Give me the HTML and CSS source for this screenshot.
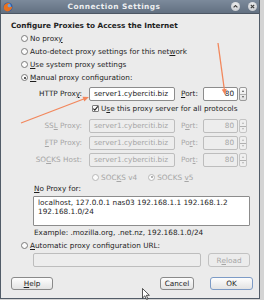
FILE: index.html
```html
<!DOCTYPE html>
<html lang="en">
<head>
<meta charset="UTF-8">
<title>Connection Settings</title>
<link rel="stylesheet" href="styles.css">
</head>
<body>

<div class="window">
  <div class="titlebar">
    <svg class="app-icon" width="10" height="10" viewBox="0 0 10 10">
      <circle cx="5" cy="5" r="4.6" fill="#2d5ea8"/>
      <circle cx="5.6" cy="4.2" r="2.4" fill="#6fa0dc"/>
      <path d="M0.6 5.6 C0.8 2.2 4 0.4 7.4 1.4 C5.6 1.6 4.4 2.6 4.6 4 C5 5.6 7.4 5.4 9.3 4.6 C9 7.6 6.8 9.6 4.4 9.5 C2.2 9.4 0.6 7.8 0.6 5.6 Z" fill="#e8711f"/>
    </svg>
    <span class="title">Connection Settings</span>
    <span class="wm-btn">
      <svg width="9" height="9" viewBox="0 0 9 9"><path d="M2.6 5.4 L4.5 3.5 L6.4 5.4" fill="none" stroke="#3c3c3c" stroke-width="1.2"/></svg>
    </span>
    <span class="wm-btn">
      <svg width="9" height="9" viewBox="0 0 9 9"><path d="M2.8 2.8 L6.2 6.2 M6.2 2.8 L2.8 6.2" fill="none" stroke="#3c3c3c" stroke-width="1.2"/></svg>
    </span>
  </div>

  <div class="content">
    <div class="heading">Configure Proxies to Access the Internet</div>

    <div class="options">
      <div class="option"><span class="radio"></span><span>No prox<u>y</u></span></div>
      <div class="option"><span class="radio"></span><span>Auto-detect proxy settings for this net<u>w</u>ork</span></div>
      <div class="option"><span class="radio"></span><span><u>U</u>se system proxy settings</span></div>
      <div class="option"><span class="radio checked"></span><span><u>M</u>anual proxy configuration:</span></div>
    </div>

    <div class="proxy-grid">
      <span class="lbl">HTTP Prox<u>y</u>:</span>
      <span class="field">server1.cyberciti.biz</span>
      <span class="port-lbl"><u>P</u>ort:</span>
      <span class="port-box">
        <span class="field port">80</span>
        <span class="spinner"><span class="up"></span><span class="down"></span></span>
      </span>

      <div class="check-row">
        <span class="checkbox">
          <svg width="7" height="7" viewBox="0 0 7 7"><path d="M1.3 3.6 L2.8 5.2 L5.8 1.4" fill="none" stroke="#222" stroke-width="1.1"/></svg>
        </span>
        <span>U<u>s</u>e this proxy server for all protocols</span>
      </div>

      <span class="lbl off">SS<u>L</u> Proxy:</span>
      <span class="field off">server1.cyberciti.biz</span>
      <span class="port-lbl off">P<u>o</u>rt:</span>
      <span class="port-box off">
        <span class="field port off">80</span>
        <span class="spinner"><span class="up"></span><span class="down"></span></span>
      </span>

      <span class="lbl off"><u>F</u>TP Proxy:</span>
      <span class="field off">server1.cyberciti.biz</span>
      <span class="port-lbl off">Po<u>r</u>t:</span>
      <span class="port-box off">
        <span class="field port off">80</span>
        <span class="spinner"><span class="up"></span><span class="down"></span></span>
      </span>

      <span class="lbl off">SO<u>C</u>KS Host:</span>
      <span class="field off">server1.cyberciti.biz</span>
      <span class="port-lbl off">Por<u>t</u>:</span>
      <span class="port-box off">
        <span class="field port off">80</span>
        <span class="spinner"><span class="up"></span><span class="down"></span></span>
      </span>

      <div class="socks-row off">
        <span class="option-inline"><span class="radio"></span><span>SOC<u>K</u>S v4</span></span>
        <span class="option-inline"><span class="radio checked"></span><span>SOCKS <u>v</u>5</span></span>
      </div>
    </div>

    <div class="no-proxy">
      <div class="np-label"><u>N</u>o Proxy for:</div>
      <div class="textarea">localhost, 127.0.0.1 nas03 192.168.1.1 192.168.1.2<br>192.168.1.0/24</div>
      <div class="example">Example: .mozilla.org, .net.nz, 192.168.1.0/24</div>
    </div>

    <div class="option auto"><span class="radio"></span><span><u>A</u>utomatic proxy configuration URL:</span></div>

    <div class="url-row">
      <span class="field off url"></span>
      <span class="btn off reload">R<u>e</u>load</span>
    </div>

    <div class="buttons">
      <span class="btn help"><u>H</u>elp</span>
      <span class="spacer"></span>
      <span class="btn cancel">Cancel</span>
      <span class="btn ok">OK</span>
    </div>
  </div>
</div>

<svg class="annotations" width="264" height="300" viewBox="0 0 264 300">
  <line x1="21" y1="123" x2="85" y2="98.5" stroke="#f2875c" stroke-width="1.3"/>
  <polygon points="89,97 84.3,101.4 82.5,96.8" fill="#f2875c"/>
  <line x1="218" y1="43" x2="224.4" y2="90" stroke="#f2875c" stroke-width="1.3"/>
  <polygon points="225,95 226.7,88.7 221.7,89.4" fill="#f2875c"/>
  <path d="M142.5 288.5 L142.5 298 L144.8 295.8 L146.6 299.4 L148 298.8 L146.3 295.3 L149.4 295.3 Z" fill="#fff" stroke="#111" stroke-width="0.7"/>
</svg>

</body>
</html>
```

FILE: styles.css
```css
body {
  margin: 0;
  background-color: #d4d4d4;
  font-family: "DejaVu Sans", sans-serif;
  font-size: 7.3px;
  color: #1e1e1e;
}
u {
  text-decoration-thickness: 0.6px;
  text-underline-offset: 1px;
}
.window {
  width: 260px;
  box-sizing: border-box;
  border: 1px solid #525c68;
  border-top: none;
  background-color: #ebebeb;
}
.titlebar {
  display: flex;
  align-items: center;
  height: 13px;
  padding: 0 2px 0 2px;
  background: linear-gradient(#7c8a9b, #627081);
  border-bottom: 1px solid #4c5663;
}
.app-icon {
  flex: none;
}
.title {
  flex: 1;
  text-align: center;
  font-weight: bold;
  font-size: 7.4px;
  letter-spacing: 0.45px;
  color: #eceef0;
  padding-right: 8px;
}
.wm-btn {
  display: flex;
  width: 9px;
  height: 9px;
  margin-left: 8px;
  border-radius: 50%;
  background: radial-gradient(circle at 50% 35%, #f4f4f4, #b9bec5);
}
.content {
  padding: 6px 6px 8px 10px;
}
.heading {
  font-weight: bold;
  line-height: 12px;
}
.option {
  display: flex;
  align-items: center;
  height: 13px;
  padding-left: 10px;
}
.radio {
  width: 7px;
  height: 7px;
  box-sizing: border-box;
  margin-right: 2px;
  border: 1px solid #7b7b7b;
  border-radius: 50%;
  background: #fbfbfb;
  position: relative;
  flex: none;
}
.radio.checked::after {
  content: "";
  position: absolute;
  left: 1.5px;
  top: 1.5px;
  width: 2px;
  height: 2px;
  border-radius: 50%;
  background: #222;
}
.proxy-grid {
  display: grid;
  grid-template-columns: 73px 86px 18px 44px;
  grid-template-rows: 14px 18px 17px 17px 17px 14px;
  column-gap: 5px;
  margin-top: 3px;
}
.lbl {
  text-align: right;
  padding-right: 2px;
  line-height: 14px;
}
.port-lbl {
  padding-left: 1px;
  line-height: 14px;
}
.off {
  color: #a6a6a6;
}
.field {
  height: 14px;
  box-sizing: border-box;
  border: 1px solid #8c8c8c;
  border-radius: 2px;
  background: #fff;
  padding-left: 4px;
  line-height: 12px;
  white-space: nowrap;
  overflow: hidden;
}
.field.off {
  border-color: #bdbdbd;
  background: #ededed;
}
.port-box {
  display: flex;
  gap: 1px;
  height: 14px;
}
.field.port {
  width: 36px;
  text-align: right;
  padding: 0 3px 0 0;
}
.spinner {
  display: flex;
  flex-direction: column;
  width: 8px;
  height: 14px;
  box-sizing: border-box;
  border: 1px solid #9a9a9a;
  border-radius: 2px;
  background: linear-gradient(#fafafa, #e2e2e2);
}
.port-box.off .spinner {
  border-color: #c4c4c4;
  background: #efefef;
}
.spinner span {
  flex: 1;
  position: relative;
}
.spinner .up {
  border-bottom: 1px solid #b0b0b0;
}
.spinner .up::after,
.spinner .down::after {
  content: "";
  position: absolute;
  left: 1.5px;
  top: 2px;
  border-left: 1.5px solid transparent;
  border-right: 1.5px solid transparent;
}
.spinner .up::after {
  border-bottom: 2px solid #555;
}
.spinner .down::after {
  top: 1.5px;
  border-top: 2px solid #555;
}
.port-box.off .spinner .up::after {
  border-bottom-color: #b5b5b5;
}
.port-box.off .spinner .down::after {
  border-top-color: #b5b5b5;
}
.check-row {
  grid-column: 2 / 5;
  display: flex;
  align-items: center;
  height: 15px;
  padding-left: 3px;
}
.checkbox {
  display: flex;
  width: 7px;
  height: 7px;
  box-sizing: border-box;
  margin-right: 2px;
  border: 1px solid #7b7b7b;
  border-radius: 1px;
  background: #fbfbfb;
}
.checkbox svg {
  margin: -1px;
}
.socks-row {
  grid-column: 2 / 5;
  display: flex;
  align-items: center;
  gap: 11px;
  padding-left: 3px;
}
.option-inline {
  display: flex;
  align-items: center;
}
.socks-row .radio {
  border-color: #b8b8b8;
}
.socks-row .radio.checked::after {
  background: #9a9a9a;
}
.no-proxy {
  padding-left: 22px;
  margin-right: 3px;
}
.np-label {
  line-height: 10px;
  padding-left: 1px;
}
.textarea {
  height: 30px;
  box-sizing: border-box;
  margin-top: 2px;
  padding: 1px 4px 0 4px;
  border: 1px solid #8c8c8c;
  border-radius: 1px;
  background: #fff;
  line-height: 9px;
}
.example {
  margin-top: 2px;
  line-height: 10px;
  padding-left: 1px;
}
.option.auto {
  height: 12px;
  margin-top: 1px;
}
.url-row {
  display: flex;
  gap: 7px;
  margin-top: 2px;
  padding-left: 22px;
  margin-right: 3px;
}
.field.url {
  width: 168px;
}
.btn {
  display: flex;
  align-items: center;
  justify-content: center;
  height: 14px;
  box-sizing: border-box;
  border: 1px solid #8a8a8a;
  border-radius: 3px;
  background: linear-gradient(#fdfdfd, #e3e3e3);
}
.btn.off {
  border-color: #c2c2c2;
  background: #ececec;
}
.reload {
  width: 42px;
}
.buttons {
  display: flex;
  margin-top: 10px;
}
.buttons .btn {
  height: 13px;
}
.help {
  width: 42px;
}
.spacer {
  flex: 1;
}
.cancel {
  width: 34px;
  margin-right: 16px;
}
.ok {
  width: 43px;
  border-color: #7d9bc6;
}
.annotations {
  position: absolute;
  left: 0;
  top: 0;
  pointer-events: none;
}
```
